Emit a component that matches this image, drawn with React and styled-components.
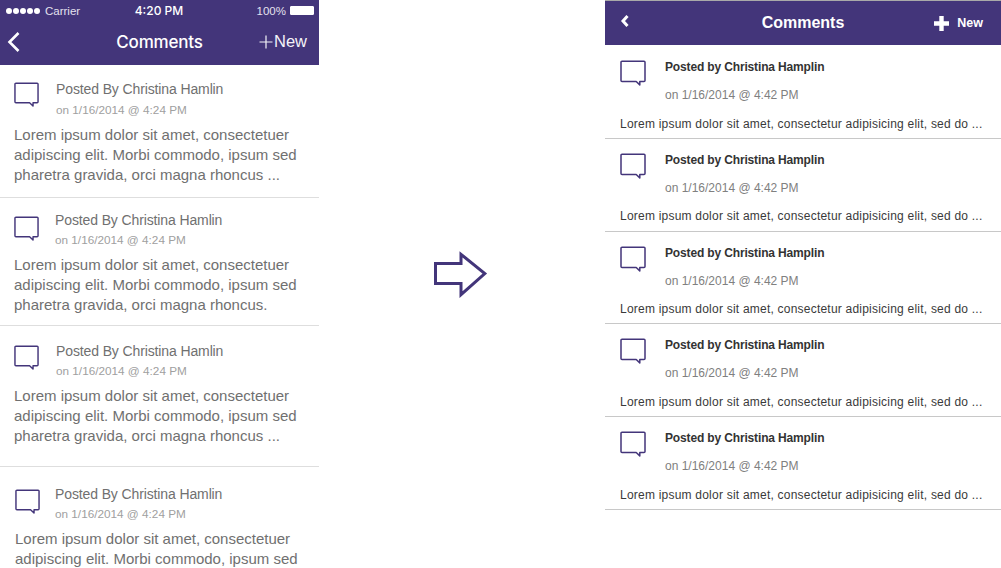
import React from 'react';
import styled, { createGlobalStyle } from 'styled-components';

const GlobalStyle = createGlobalStyle`
    html, body {
        margin: 0;
        height: 568px;
        overflow: hidden;
        background: #fff;
        font-family: 'Liberation Sans', Arial, sans-serif;
    }
`;

const PURPLE = '#43357a';

const Page = styled.div`
    display: flex;
    width: 1001px;
    height: 568px;
    overflow: hidden;
`;

const Phone = styled.div`
    width: 319px;
    height: 568px;
    flex: none;
    overflow: hidden;
`;

const PhoneTop = styled.div`
    height: 65px;
    padding: 0 5px 0 6px;
    background: ${PURPLE};
    color: #fff;
    box-sizing: border-box;
    position: relative;
`;

const StatusBar = styled.div`
    height: 21px;
    display: grid;
    grid-template-columns: 1fr 1fr 1fr;
    align-items: center;
    font-size: 11.5px;
`;

const Signal = styled.div`
    display: flex;
    align-items: center;
    gap: 1px;
    color: #e4e1ee;
`;

const Dot = styled.span`
    width: 6px;
    height: 6px;
    border-radius: 50%;
    background: #fff;
`;

const Carrier = styled.span`
    margin-left: 4px;
`;

const Clock = styled.div`
    text-align: center;
    font-family: 'Inter', sans-serif;
    font-weight: 500;
    font-size: 12px;
    margin-right: 2px;
`;

const Battery = styled.div`
    display: flex;
    justify-content: flex-end;
    align-items: center;
    gap: 4px;
    color: #e4e1ee;
`;

const BatteryCell = styled.span`
    width: 22px;
    height: 7px;
    background: #fff;
    border: 1px solid #fff;
    border-radius: 1px;
`;

const PhoneNav = styled.div`
    height: 44px;
    display: flex;
    align-items: center;
    justify-content: space-between;
    padding-bottom: 3px;
    box-sizing: border-box;
`;

const PhoneTitle = styled.div`
    position: absolute;
    left: 0;
    width: 319px;
    text-align: center;
    font-family: 'Inter', sans-serif;
    font-size: 17px;
    font-weight: 500;
    letter-spacing: -0.2px;
`;

const PhoneNew = styled.div`
    font-size: 16.5px;
    display: flex;
    align-items: center;
    gap: 1px;
    margin-right: 7px;
    color: #f4f3f8;
`;

const PhoneRow = styled.div`
    height: ${(p) => p.$height}px;
    padding: ${(p) => p.$top}px 18px 0 ${(p) => p.$left}px;
    box-sizing: border-box;
    border-bottom: 1px solid ${(p) => (p.$last ? 'transparent' : '#dedede')};
`;

const PhoneHead = styled.div`
    display: flex;
    align-items: flex-start;
    gap: ${(p) => p.$gap}px;
`;

const IconWrap = styled.div`
    flex: none;
    padding-top: ${(p) => p.$top || 0}px;
`;

const PhoneName = styled.div`
    font-size: 14px;
    line-height: 20px;
    letter-spacing: -0.12px;
    color: #707070;
`;

const PhoneDate = styled.div`
    font-size: 11.75px;
    line-height: 20px;
    margin-top: ${(p) => p.$top}px;
    color: #a0a0a0;
`;

const PhoneBody = styled.div`
    font-size: 15px;
    line-height: 20px;
    margin-top: 5px;
    color: #707070;
    white-space: nowrap;
`;

const Middle = styled.div`
    width: 286px;
    flex: none;
    padding: 251px 0 0 115px;
    box-sizing: border-box;
`;

const Board = styled.div`
    width: 396px;
    flex: none;
`;

const BoardNav = styled.div`
    height: 45px;
    border-top: 1px solid #a9a9a9;
    background: ${PURPLE};
    color: #fff;
    display: flex;
    align-items: center;
    justify-content: space-between;
    padding: 0 18px 0 15px;
    box-sizing: border-box;
    position: relative;
`;

const BoardTitle = styled.div`
    position: absolute;
    left: 0;
    width: 100%;
    text-align: center;
    font-size: 16px;
    font-weight: 700;
`;

const BoardNew = styled.div`
    display: flex;
    align-items: center;
    gap: 8px;
    font-size: 12.5px;
    font-weight: 700;
`;

const BoardRow = styled.div`
    height: ${(p) => p.$height}px;
    padding: ${(p) => p.$top}px 15px 0;
    box-sizing: border-box;
    border-bottom: 1px solid #c8c8c8;
`;

const BoardHead = styled.div`
    display: flex;
    align-items: flex-start;
    gap: 19px;
    height: ${(p) => p.$height}px;
`;

const BoardName = styled.div`
    font-size: 12px;
    font-weight: 700;
    line-height: 20px;
    letter-spacing: -0.15px;
    color: #333;
`;

const BoardDate = styled.div`
    font-size: 12px;
    line-height: 20px;
    margin-top: 8px;
    color: #808080;
`;

const BoardBody = styled.div`
    font-size: 12px;
    line-height: 20px;
    letter-spacing: 0.22px;
    color: #3a3a3a;
    white-space: nowrap;
`;

const Bubble = ({ width }) => (
    <svg width={width} height={width} viewBox="0 0 26 26" fill="none">
        <path
            d="M2 1.2h22a1 1 0 0 1 1 1v18.3a1 1 0 0 1-1 1h-4.2v3.4l-3.6-3.4H2a1 1 0 0 1-1-1V2.2a1 1 0 0 1 1-1z"
            stroke={PURPLE}
            strokeWidth="1.5"
            strokeLinejoin="round"
        />
    </svg>
);

const phoneRows = [
    { height: 133, top: 14, left: 14, gap: 17, iconTop: 3, dateTop: 1, end: 'pharetra gravida, orci magna rhoncus ...' },
    { height: 128, top: 12, left: 14, gap: 16, iconTop: 6, dateTop: 0, end: 'pharetra gravida, orci magna rhoncus.' },
    { height: 141, top: 15, left: 14, gap: 17, iconTop: 4, dateTop: 0, end: 'pharetra gravida, orci magna rhoncus ...' },
    { height: 110, top: 17, left: 15, gap: 15, iconTop: 5, dateTop: 0, end: '', last: true },
];

const boardRows = [
    { height: 94, top: 12, head: 57 },
    { height: 93, top: 11, head: 56 },
    { height: 92, top: 11, head: 56 },
    { height: 93, top: 11, head: 57 },
    { height: 93, top: 11, head: 57 },
];

const App = () => (
    <Page>
        <GlobalStyle />
        <Phone>
            <PhoneTop>
                <StatusBar>
                    <Signal>
                        <Dot />
                        <Dot />
                        <Dot />
                        <Dot />
                        <Dot />
                        <Carrier>Carrier</Carrier>
                    </Signal>
                    <Clock>4:20 PM</Clock>
                    <Battery>
                        100%
                        <BatteryCell />
                    </Battery>
                </StatusBar>
                <PhoneNav>
                    <PhoneTitle>Comments</PhoneTitle>
                    <svg width="16" height="22" viewBox="0 0 16 22" fill="none">
                        <path d="M12.5 2L3.5 11l9 9" stroke="#fff" strokeWidth="2.6" />
                    </svg>
                    <PhoneNew>
                        <svg width="14" height="14" viewBox="0 0 14 14" fill="none">
                            <path d="M7 0.5v13M0.5 7h13" stroke="#f4f3f8" strokeWidth="1.2" />
                        </svg>
                        New
                    </PhoneNew>
                </PhoneNav>
            </PhoneTop>
            {phoneRows.map((row, index) => (
                <PhoneRow key={index} $height={row.height} $top={row.top} $left={row.left} $last={row.last}>
                    <PhoneHead $gap={row.gap}>
                        <IconWrap $top={row.iconTop}>
                            <Bubble width={25} />
                        </IconWrap>
                        <div>
                            <PhoneName>Posted By Christina Hamlin</PhoneName>
                            <PhoneDate $top={row.dateTop}>on 1/16/2014 @ 4:24 PM</PhoneDate>
                        </div>
                    </PhoneHead>
                    <PhoneBody>
                        Lorem ipsum dolor sit amet, consectetuer
                        <br />
                        adipiscing elit. Morbi commodo, ipsum sed
                        {row.end && <br />}
                        {row.end}
                    </PhoneBody>
                </PhoneRow>
            ))}
        </Phone>
        <Middle>
            <svg width="54" height="47" viewBox="0 0 54 47" fill="none">
                <path d="M1.5 12.5H27V3.3L50.8 22.5 27 43.7V32.5H1.5z" stroke={PURPLE} strokeWidth="3" />
            </svg>
        </Middle>
        <Board>
            <BoardNav>
                <BoardTitle>Comments</BoardTitle>
                <svg width="10" height="14" viewBox="0 0 10 14" fill="none" style={{ marginTop: -4 }}>
                    <path d="M7.5 2L3 7l4.5 5" stroke="#fff" strokeWidth="3" />
                </svg>
                <BoardNew>
                    <svg width="15" height="15" viewBox="0 0 15 15">
                        <path d="M5.3 0h4.4v5.3H15v4.4H9.7V15H5.3V9.7H0V5.3h5.3z" fill="#fff" />
                    </svg>
                    New
                </BoardNew>
            </BoardNav>
            {boardRows.map((row, index) => (
                <BoardRow key={index} $height={row.height} $top={row.top}>
                    <BoardHead $height={row.head}>
                        <IconWrap $top={3}>
                            <Bubble width={26} />
                        </IconWrap>
                        <div>
                            <BoardName>Posted by Christina Hamplin</BoardName>
                            <BoardDate>on 1/16/2014 @ 4:42 PM</BoardDate>
                        </div>
                    </BoardHead>
                    <BoardBody>Lorem ipsum dolor sit amet, consectetur adipisicing elit, sed do ...</BoardBody>
                </BoardRow>
            ))}
        </Board>
    </Page>
);

export default App;
